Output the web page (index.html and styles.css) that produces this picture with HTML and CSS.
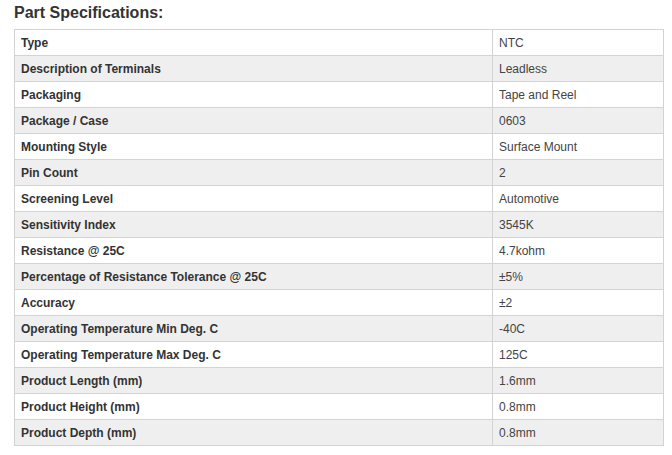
FILE: index.html
```html
<!DOCTYPE html>
<html>
<head>
<meta charset="utf-8">
<link rel="stylesheet" href="styles.css">
</head>
<body>
<h2 class="title">Part Specifications:</h2>
<table class="specs">
<tbody>
<tr><th>Type</th><td>NTC</td></tr>
<tr><th>Description of Terminals</th><td>Leadless</td></tr>
<tr><th>Packaging</th><td>Tape and Reel</td></tr>
<tr><th>Package / Case</th><td>0603</td></tr>
<tr><th>Mounting Style</th><td>Surface Mount</td></tr>
<tr><th>Pin Count</th><td>2</td></tr>
<tr><th>Screening Level</th><td>Automotive</td></tr>
<tr><th>Sensitivity Index</th><td>3545K</td></tr>
<tr><th>Resistance @ 25C</th><td>4.7kohm</td></tr>
<tr><th>Percentage of Resistance Tolerance @ 25C</th><td>±5%</td></tr>
<tr><th>Accuracy</th><td>±2</td></tr>
<tr><th>Operating Temperature Min Deg. C</th><td>-40C</td></tr>
<tr><th>Operating Temperature Max Deg. C</th><td>125C</td></tr>
<tr><th>Product Length (mm)</th><td>1.6mm</td></tr>
<tr><th>Product Height (mm)</th><td>0.8mm</td></tr>
<tr><th>Product Depth (mm)</th><td>0.8mm</td></tr>
</tbody>
</table>
</body>
</html>
```
FILE: styles.css
```css
html, body {
  margin: 0;
  padding: 0;
  background: #fff;
}
body {
  padding: 0 9px 0 14px;
  font-family: "Liberation Sans", Arial, sans-serif;
  color: #333;
}
.title {
  margin: 0;
  padding-top: 3px;
  height: 26px;
  font-size: 16px;
  line-height: 20px;
  font-weight: bold;
  color: #333;
}
.specs {
  width: 650px;
  border-collapse: collapse;
  font-size: 12px;
}
.specs th, .specs td {
  border: 1px solid #d3d3d3;
  height: 25px;
  padding: 0 6px;
  text-align: left;
  vertical-align: middle;
  line-height: 14px;
}
.specs th {
  width: 465px;
  font-weight: bold;
  color: #333;
}
.specs td {
  font-weight: normal;
  color: #444;
}
.specs tr:nth-child(even) th,
.specs tr:nth-child(even) td {
  background: #efefef;
}
```
